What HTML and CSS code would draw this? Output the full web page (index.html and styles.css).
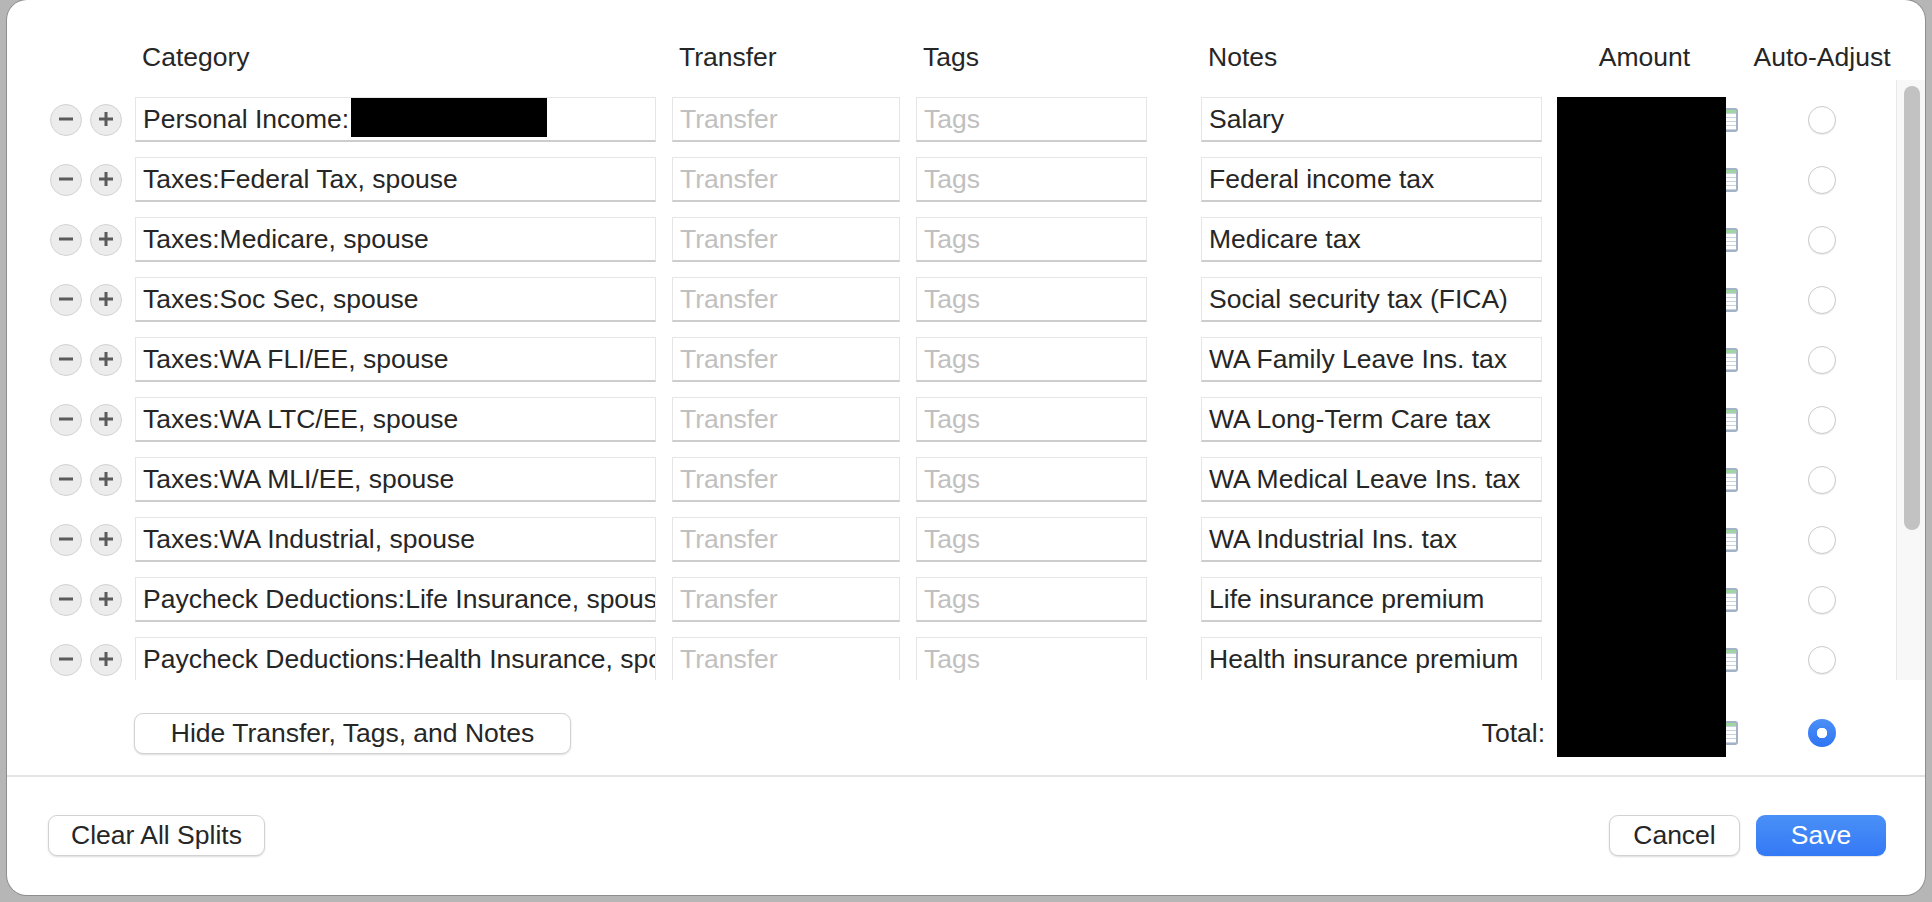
FILE: index.html
```html
<!DOCTYPE html>
<html>
<head>
<meta charset="utf-8">
<link rel="stylesheet" href="styles.css">
</head>
<body>
<div class="dialog">
  <div class="head">
    <div class="c-minus"></div>
    <div class="c-plus"></div>
    <div class="c-cat hlabel">Category</div>
    <div class="c-tr hlabel">Transfer</div>
    <div class="c-tags hlabel">Tags</div>
    <div class="c-notes hlabel">Notes</div>
    <div class="c-amt hlabel center">Amount</div>
    <div class="c-radio hlabel center">Auto-Adjust</div>
  </div>

  <div class="scroll">
    <div class="rows">
      <div class="row">
        <div class="c-minus"><span class="rbtn"><svg viewBox="0 0 32 32"><rect x="9" y="14.5" width="14" height="3" fill="#5b5b5b"/></svg></span></div>
        <div class="c-plus"><span class="rbtn"><svg viewBox="0 0 32 32"><rect x="9" y="14.5" width="14" height="3" fill="#5b5b5b"/><rect x="14.5" y="9" width="3" height="14" fill="#5b5b5b"/></svg></span></div>
        <div class="c-cat field">Personal Income:<span class="redact-cat"></span></div>
        <div class="c-tr field ph">Transfer</div>
        <div class="c-tags field ph">Tags</div>
        <div class="c-notes field">Salary</div>
        <div class="c-amt amt"><span class="calc"></span></div>
        <div class="c-radio center"><span class="radio"></span></div>
      </div>
      <div class="row">
        <div class="c-minus"><span class="rbtn"><svg viewBox="0 0 32 32"><rect x="9" y="14.5" width="14" height="3" fill="#5b5b5b"/></svg></span></div>
        <div class="c-plus"><span class="rbtn"><svg viewBox="0 0 32 32"><rect x="9" y="14.5" width="14" height="3" fill="#5b5b5b"/><rect x="14.5" y="9" width="3" height="14" fill="#5b5b5b"/></svg></span></div>
        <div class="c-cat field">Taxes:Federal Tax, spouse</div>
        <div class="c-tr field ph">Transfer</div>
        <div class="c-tags field ph">Tags</div>
        <div class="c-notes field">Federal income tax</div>
        <div class="c-amt amt"><span class="calc"></span></div>
        <div class="c-radio center"><span class="radio"></span></div>
      </div>
      <div class="row">
        <div class="c-minus"><span class="rbtn"><svg viewBox="0 0 32 32"><rect x="9" y="14.5" width="14" height="3" fill="#5b5b5b"/></svg></span></div>
        <div class="c-plus"><span class="rbtn"><svg viewBox="0 0 32 32"><rect x="9" y="14.5" width="14" height="3" fill="#5b5b5b"/><rect x="14.5" y="9" width="3" height="14" fill="#5b5b5b"/></svg></span></div>
        <div class="c-cat field">Taxes:Medicare, spouse</div>
        <div class="c-tr field ph">Transfer</div>
        <div class="c-tags field ph">Tags</div>
        <div class="c-notes field">Medicare tax</div>
        <div class="c-amt amt"><span class="calc"></span></div>
        <div class="c-radio center"><span class="radio"></span></div>
      </div>
      <div class="row">
        <div class="c-minus"><span class="rbtn"><svg viewBox="0 0 32 32"><rect x="9" y="14.5" width="14" height="3" fill="#5b5b5b"/></svg></span></div>
        <div class="c-plus"><span class="rbtn"><svg viewBox="0 0 32 32"><rect x="9" y="14.5" width="14" height="3" fill="#5b5b5b"/><rect x="14.5" y="9" width="3" height="14" fill="#5b5b5b"/></svg></span></div>
        <div class="c-cat field">Taxes:Soc Sec, spouse</div>
        <div class="c-tr field ph">Transfer</div>
        <div class="c-tags field ph">Tags</div>
        <div class="c-notes field">Social security tax (FICA)</div>
        <div class="c-amt amt"><span class="calc"></span></div>
        <div class="c-radio center"><span class="radio"></span></div>
      </div>
      <div class="row">
        <div class="c-minus"><span class="rbtn"><svg viewBox="0 0 32 32"><rect x="9" y="14.5" width="14" height="3" fill="#5b5b5b"/></svg></span></div>
        <div class="c-plus"><span class="rbtn"><svg viewBox="0 0 32 32"><rect x="9" y="14.5" width="14" height="3" fill="#5b5b5b"/><rect x="14.5" y="9" width="3" height="14" fill="#5b5b5b"/></svg></span></div>
        <div class="c-cat field">Taxes:WA FLI/EE, spouse</div>
        <div class="c-tr field ph">Transfer</div>
        <div class="c-tags field ph">Tags</div>
        <div class="c-notes field">WA Family Leave Ins. tax</div>
        <div class="c-amt amt"><span class="calc"></span></div>
        <div class="c-radio center"><span class="radio"></span></div>
      </div>
      <div class="row">
        <div class="c-minus"><span class="rbtn"><svg viewBox="0 0 32 32"><rect x="9" y="14.5" width="14" height="3" fill="#5b5b5b"/></svg></span></div>
        <div class="c-plus"><span class="rbtn"><svg viewBox="0 0 32 32"><rect x="9" y="14.5" width="14" height="3" fill="#5b5b5b"/><rect x="14.5" y="9" width="3" height="14" fill="#5b5b5b"/></svg></span></div>
        <div class="c-cat field">Taxes:WA LTC/EE, spouse</div>
        <div class="c-tr field ph">Transfer</div>
        <div class="c-tags field ph">Tags</div>
        <div class="c-notes field">WA Long-Term Care tax</div>
        <div class="c-amt amt"><span class="calc"></span></div>
        <div class="c-radio center"><span class="radio"></span></div>
      </div>
      <div class="row">
        <div class="c-minus"><span class="rbtn"><svg viewBox="0 0 32 32"><rect x="9" y="14.5" width="14" height="3" fill="#5b5b5b"/></svg></span></div>
        <div class="c-plus"><span class="rbtn"><svg viewBox="0 0 32 32"><rect x="9" y="14.5" width="14" height="3" fill="#5b5b5b"/><rect x="14.5" y="9" width="3" height="14" fill="#5b5b5b"/></svg></span></div>
        <div class="c-cat field">Taxes:WA MLI/EE, spouse</div>
        <div class="c-tr field ph">Transfer</div>
        <div class="c-tags field ph">Tags</div>
        <div class="c-notes field">WA Medical Leave Ins. tax</div>
        <div class="c-amt amt"><span class="calc"></span></div>
        <div class="c-radio center"><span class="radio"></span></div>
      </div>
      <div class="row">
        <div class="c-minus"><span class="rbtn"><svg viewBox="0 0 32 32"><rect x="9" y="14.5" width="14" height="3" fill="#5b5b5b"/></svg></span></div>
        <div class="c-plus"><span class="rbtn"><svg viewBox="0 0 32 32"><rect x="9" y="14.5" width="14" height="3" fill="#5b5b5b"/><rect x="14.5" y="9" width="3" height="14" fill="#5b5b5b"/></svg></span></div>
        <div class="c-cat field">Taxes:WA Industrial, spouse</div>
        <div class="c-tr field ph">Transfer</div>
        <div class="c-tags field ph">Tags</div>
        <div class="c-notes field">WA Industrial Ins. tax</div>
        <div class="c-amt amt"><span class="calc"></span></div>
        <div class="c-radio center"><span class="radio"></span></div>
      </div>
      <div class="row">
        <div class="c-minus"><span class="rbtn"><svg viewBox="0 0 32 32"><rect x="9" y="14.5" width="14" height="3" fill="#5b5b5b"/></svg></span></div>
        <div class="c-plus"><span class="rbtn"><svg viewBox="0 0 32 32"><rect x="9" y="14.5" width="14" height="3" fill="#5b5b5b"/><rect x="14.5" y="9" width="3" height="14" fill="#5b5b5b"/></svg></span></div>
        <div class="c-cat field">Paycheck Deductions:Life Insurance, spouse</div>
        <div class="c-tr field ph">Transfer</div>
        <div class="c-tags field ph">Tags</div>
        <div class="c-notes field">Life insurance premium</div>
        <div class="c-amt amt"><span class="calc"></span></div>
        <div class="c-radio center"><span class="radio"></span></div>
      </div>
      <div class="row">
        <div class="c-minus"><span class="rbtn"><svg viewBox="0 0 32 32"><rect x="9" y="14.5" width="14" height="3" fill="#5b5b5b"/></svg></span></div>
        <div class="c-plus"><span class="rbtn"><svg viewBox="0 0 32 32"><rect x="9" y="14.5" width="14" height="3" fill="#5b5b5b"/><rect x="14.5" y="9" width="3" height="14" fill="#5b5b5b"/></svg></span></div>
        <div class="c-cat field">Paycheck Deductions:Health Insurance, spouse</div>
        <div class="c-tr field ph">Transfer</div>
        <div class="c-tags field ph">Tags</div>
        <div class="c-notes field">Health insurance premium</div>
        <div class="c-amt amt"><span class="calc"></span></div>
        <div class="c-radio center"><span class="radio"></span></div>
      </div>
    </div>
    <div class="scrollbar"><div class="thumb"></div></div>
  </div>

  <div class="totals">
    <div class="c-minus"></div>
    <div class="c-plus"></div>
    <div class="c-hide"><button class="btn hide-btn">Hide Transfer, Tags, and Notes</button></div>
    <div class="c-total">Total:</div>
    <div class="c-amt amt"><span class="calc"></span></div>
    <div class="c-radio center"><span class="radio checked"></span></div>
  </div>

  <div class="sep"></div>

  <div class="footer">
    <button class="btn clear-btn">Clear All Splits</button>
    <div class="footer-right">
      <button class="btn cancel-btn">Cancel</button>
      <button class="btn save-btn">Save</button>
    </div>
  </div>

  <div class="redact-amt"></div>
</div>
</body>
</html>
```

FILE: styles.css
```css
* { box-sizing: border-box; }

html, body {
  margin: 0;
  padding: 0;
}

body {
  width: 1932px;
  height: 902px;
  overflow: hidden;
  background: #b6b6b6;
  font-family: "Liberation Sans", Arial, sans-serif;
  font-size: 26.5px;
  color: #262626;
}

.dialog {
  position: relative;
  margin-left: 7px;
  width: 1918px;
  height: 895px;
  background: #ffffff;
  border-radius: 20px;
  box-shadow: 0 0 0 1px rgba(0, 0, 0, 0.22);
  display: flex;
  flex-direction: column;
  overflow: hidden;
}

/* column system (relative to dialog left) */
.head, .row, .totals {
  display: flex;
  flex-shrink: 0;
}

.c-minus { width: 32px; margin-left: 43px; flex-shrink: 0; }
.c-plus  { width: 32px; margin-left: 8px; flex-shrink: 0; }
.c-cat   { width: 521px; margin-left: 13px; flex-shrink: 0; }
.c-tr    { width: 228px; margin-left: 16px; flex-shrink: 0; }
.c-tags  { width: 231px; margin-left: 16px; flex-shrink: 0; }
.c-notes { width: 341px; margin-left: 54px; flex-shrink: 0; }
.c-amt   { width: 175px; margin-left: 15px; flex-shrink: 0; }
.c-radio { width: 60px; margin-left: 60px; flex-shrink: 0; }

.center {
  display: flex;
  justify-content: center;
  align-items: center;
  white-space: nowrap;
}

/* header */
.head {
  height: 80px;
  padding-top: 42px;
}
.hlabel {
  height: 30px;
  line-height: 30px;
  padding-left: 7px;
  white-space: nowrap;
}
.hlabel.center { padding-left: 0; }

/* scroll area */
.scroll {
  height: 600px;
  display: flex;
  flex-shrink: 0;
}
.rows {
  flex: 1;
  overflow: hidden;
  padding-top: 17px;
}
.row {
  height: 45px;
  margin-bottom: 15px;
  align-items: center;
}

.rbtn {
  display: block;
  width: 32px;
  height: 32px;
  border-radius: 50%;
  background: #ececec;
  border: 1.5px solid #d3d3d3;
  position: relative;
}
.rbtn svg {
  position: absolute;
  left: -1.5px;
  top: -1.5px;
  width: 32px;
  height: 32px;
}

.field {
  position: relative;
  height: 45px;
  line-height: 42px;
  padding-left: 7px;
  background: #ffffff;
  border: 1px solid #e6e6e6;
  border-bottom: 2px solid #cdcdcd;
  white-space: nowrap;
  overflow: hidden;
}
.field.ph { color: #c0c0c0; }

.redact-cat {
  position: absolute;
  left: 215px;
  top: 0px;
  width: 196px;
  height: 39px;
  background: #000;
}

.amt {
  height: 45px;
  display: flex;
  justify-content: flex-end;
  align-items: center;
}
.calc {
  display: block;
  width: 16px;
  height: 24px;
  margin-right: -6px;
  border: 2px solid #a3b2c4;
  border-radius: 3px;
  background:
    linear-gradient(#9fd79f, #9fd79f) 0 0 / 100% 3px no-repeat,
    repeating-linear-gradient(#ffffff 0 3px, #c9d3df 3px 4px);
}

.radio {
  display: block;
  width: 28px;
  height: 28px;
  border-radius: 50%;
  background: #ffffff;
  border: 1px solid #cbcbcb;
  box-shadow: 0 1px 1px rgba(0, 0, 0, 0.08);
}
.radio.checked {
  border: none;
  background: radial-gradient(circle, #ffffff 0 5px, transparent 5.5px),
              linear-gradient(#4b8ff7, #2f74f3);
  box-shadow: none;
}

.scrollbar {
  width: 29px;
  height: 600px;
  background: #f8f8f8;
  border-left: 1px solid #e8e8e8;
  padding: 6px 0 0 7px;
}
.thumb {
  width: 16px;
  height: 444px;
  border-radius: 8px;
  background: #c2c2c2;
}

/* totals */
.totals {
  height: 95px;
  padding-top: 11px;
  align-items: center;
}
.c-hide { width: 1013px; margin-left: 12px; flex-shrink: 0; }
.c-total {
  width: 344px;
  margin-left: 54px;
  margin-right: -3px;
  flex-shrink: 0;
  text-align: right;
}

.btn {
  font-family: inherit;
  font-size: 26.5px;
  color: #262626;
  background: #ffffff;
  border: 1px solid #d2d2d2;
  border-radius: 9px;
  box-shadow: 0 1px 2px rgba(0, 0, 0, 0.14);
  height: 41px;
  padding: 0;
  line-height: 38px;
  cursor: default;
}
.hide-btn { width: 437px; }

.sep {
  height: 2px;
  background: #e4e4e4;
  flex-shrink: 0;
}

.footer {
  flex: 1;
  display: flex;
  align-items: center;
  justify-content: space-between;
  padding: 0 39px 2px 41px;
}
.clear-btn { width: 217px; }
.footer-right {
  display: flex;
  gap: 16px;
}
.cancel-btn { width: 131px; }
.save-btn {
  width: 130px;
  color: #ffffff;
  border: none;
  background: linear-gradient(#4a90f7, #3479f5);
  box-shadow: 0 1px 1px rgba(0, 0, 0, 0.1);
}

.redact-amt {
  position: absolute;
  left: 1550px;
  top: 97px;
  width: 169px;
  height: 660px;
  background: #000;
}
```
